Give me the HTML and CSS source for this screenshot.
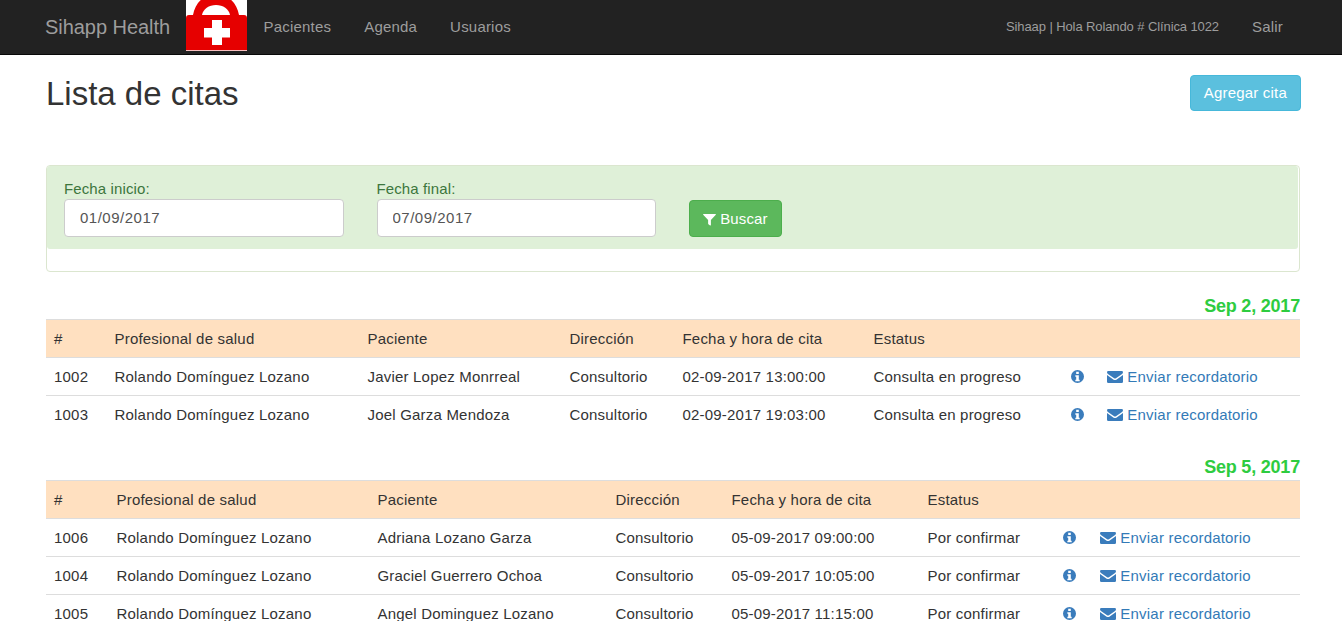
FILE: index.html
```html
<!DOCTYPE html>
<html lang="es">
<head>
<meta charset="utf-8">
<title>Lista de citas</title>
<link rel="stylesheet" href="styles.css">
</head>
<body>
<svg class="sprite" width="0" height="0" aria-hidden="true">
  <symbol id="i-info" viewBox="0 0 24 24"><path fill-rule="evenodd" d="M12 0a12 12 0 1 0 0 24 12 12 0 0 0 0-24zM9.600 3.400h4.800v3.800H9.600zM8 9.600h6.400v8.200H16v2.800H8v-2.800h1.600v-5.400H8z"/></symbol>
  <symbol id="i-mail" viewBox="0 0 24 18"><path d="M2 0h20a2 2 0 0 1 2 2c0 1-.6 1.800-1.400 2.400L13.400 10.800c-.9.6-1.900.6-2.800 0L1.400 4.400C.6 3.800 0 3 0 2a2 2 0 0 1 2-2zM0 6l10 7c1.200.8 2.800.8 4 0l10-7v10a2 2 0 0 1-2 2H2a2 2 0 0 1-2-2z"/></symbol>
</svg>
<nav class="navbar">
  <a class="brand" href="#">Sihapp Health</a>
  <svg class="logo" viewBox="0 0 61 51" aria-label="Logo">
    <rect width="61" height="51" fill="#fff"/>
    <path d="M0 18Q0 15 3 15H7C9 3 18-6 30-6S51 3 53 15H58Q61 15 61 18V50.300H0z" fill="#e60000"/>
    <path d="M16 15C17 9 23 5 30 5S43 9 44 15z" fill="#fff"/>
    <path d="M26 20h10v8h8v9.500h-8V45H26v-7.500h-8V28h8z" fill="#fff"/>
  </svg>
  <ul class="nav">
    <li><a href="#">Pacientes</a></li>
    <li><a href="#">Agenda</a></li>
    <li><a href="#">Usuarios</a></li>
  </ul>
  <span class="nav-text">Sihaap | Hola Rolando # Clínica 1022</span>
  <a class="logout" href="#">Salir</a>
</nav>
<main class="container">
  <header class="page-head">
    <h1>Lista de citas</h1>
    <a class="btn btn-info" href="#">Agregar cita</a>
  </header>
  <section class="panel">
    <form class="filter">
      <div class="field">
        <label for="inicio">Fecha inicio:</label>
        <input id="inicio" type="text" value="01/09/2017">
      </div>
      <div class="field">
        <label for="final">Fecha final:</label>
        <input id="final" type="text" value="07/09/2017">
      </div>
      <button class="btn btn-success" type="button">
        <svg class="funnel" viewBox="0 0 14 14"><path d="M.6 1h12.800c.5 0 .7.6.4 1L8.500 7.500V13c0 .5-.5.7-.9.400L5.800 12c-.2-.2-.3-.4-.3-.6V7.500L.2 2c-.3-.4-.1-1 .4-1z"/></svg>
        Buscar
      </button>
    </form>
  </section>

  <h2 class="day">Sep 2, 2017</h2>
  <table class="table t-a">
    <colgroup><col class="a1"><col class="a2"><col class="a3"><col class="a4"><col class="a5"><col class="a6"><col class="a7"><col></colgroup>
    <thead><tr><th>#</th><th>Profesional de salud</th><th>Paciente</th><th>Dirección</th><th>Fecha y hora de cita</th><th>Estatus</th><th></th><th></th></tr></thead>
    <tbody>
      <tr><td>1002</td><td>Rolando Domínguez Lozano</td><td>Javier Lopez Monrreal</td><td>Consultorio</td><td>02-09-2017 13:00:00</td><td>Consulta en progreso</td><td><a class="ico" href="#"><svg class="i-info"><use href="#i-info"/></svg></a></td><td><a href="#"><svg class="i-mail"><use href="#i-mail"/></svg> Enviar recordatorio</a></td></tr>
      <tr><td>1003</td><td>Rolando Domínguez Lozano</td><td>Joel Garza Mendoza</td><td>Consultorio</td><td>02-09-2017 19:03:00</td><td>Consulta en progreso</td><td><a class="ico" href="#"><svg class="i-info"><use href="#i-info"/></svg></a></td><td><a href="#"><svg class="i-mail"><use href="#i-mail"/></svg> Enviar recordatorio</a></td></tr>
    </tbody>
  </table>

  <h2 class="day day-next">Sep 5, 2017</h2>
  <table class="table t-b">
    <colgroup><col class="b1"><col class="b2"><col class="b3"><col class="b4"><col class="b5"><col class="b6"><col class="b7"><col></colgroup>
    <thead><tr><th>#</th><th>Profesional de salud</th><th>Paciente</th><th>Dirección</th><th>Fecha y hora de cita</th><th>Estatus</th><th></th><th></th></tr></thead>
    <tbody>
      <tr><td>1006</td><td>Rolando Domínguez Lozano</td><td>Adriana Lozano Garza</td><td>Consultorio</td><td>05-09-2017 09:00:00</td><td>Por confirmar</td><td><a class="ico" href="#"><svg class="i-info"><use href="#i-info"/></svg></a></td><td><a href="#"><svg class="i-mail"><use href="#i-mail"/></svg> Enviar recordatorio</a></td></tr>
      <tr><td>1004</td><td>Rolando Domínguez Lozano</td><td>Graciel Guerrero Ochoa</td><td>Consultorio</td><td>05-09-2017 10:05:00</td><td>Por confirmar</td><td><a class="ico" href="#"><svg class="i-info"><use href="#i-info"/></svg></a></td><td><a href="#"><svg class="i-mail"><use href="#i-mail"/></svg> Enviar recordatorio</a></td></tr>
      <tr><td>1005</td><td>Rolando Domínguez Lozano</td><td>Angel Dominguez Lozano</td><td>Consultorio</td><td>05-09-2017 11:15:00</td><td>Por confirmar</td><td><a class="ico" href="#"><svg class="i-info"><use href="#i-info"/></svg></a></td><td><a href="#"><svg class="i-mail"><use href="#i-mail"/></svg> Enviar recordatorio</a></td></tr>
    </tbody>
  </table>
</main>
</body>
</html>
```
FILE: styles.css
```css
* { box-sizing: border-box; }
html, body { height: 621px; overflow: hidden; }
body {
  margin: 0;
  background: #fff;
  color: #333;
  font: 15px/20px "Liberation Sans", Arial, sans-serif;
  letter-spacing: .2px;
}
a { text-decoration: none; color: #337ab7; }
.sprite { position: absolute; }

.navbar {
  display: flex;
  align-items: flex-start;
  height: 55px;
  padding: 0 45px;
  background: #222;
  border-bottom: 1px solid #080808;
  letter-spacing: 0;
}
.brand { width: 141px; font-size: 20px; letter-spacing: -.05px; line-height: 54px; color: #9d9d9d; }
.logo { width: 61px; height: 51px; flex: none; }
.nav { display: flex; gap: 33px; margin: 0 0 0 16.500px; padding: 0; list-style: none; letter-spacing: .2px; }
.nav a { display: block; line-height: 54px; color: #9d9d9d; }
.nav-text { margin-left: auto; font-size: 13px; letter-spacing: -.1px; line-height: 54px; color: #9d9d9d; }
.logout { margin: 0 14px 0 33px; letter-spacing: .2px; line-height: 54px; color: #9d9d9d; }

.container { padding: 0 42px 0 46px; }
.page-head { display: flex; justify-content: space-between; align-items: flex-start; height: 110px; padding-top: 20px; }
h1 { margin: 0; font-size: 33px; font-weight: 400; line-height: 38px; letter-spacing: 0; }

.btn {
  display: inline-block;
  padding: 8px 13px;
  border: 1px solid transparent;
  border-radius: 4px;
  font: 15px/18px "Liberation Sans", Arial, sans-serif;
  letter-spacing: .2px;
  color: #fff;
}
.btn-info { margin-right: -1px; background: #5bc0de; border-color: #46b8da; }
.btn-success { padding: 9px 13px; height: 37px; background: #5cb85c; border-color: #4cae4c; letter-spacing: .1px; }
.funnel { width: 13px; height: 13px; fill: #fff; vertical-align: -2px; }

.panel { height: 107px; border: 1px solid #dbe6cf; border-radius: 4px; }
.filter {
  display: flex;
  align-items: flex-end;
  gap: 33px;
  width: 1251px;
  height: 83px;
  padding: 14px 17px 12px;
  background: #dff0d8;
  border-radius: 3px;
  color: #3c763d;
}
.field { display: flex; flex-direction: column; width: 279.500px; }
.field label { line-height: 16px; margin-bottom: 2px; letter-spacing: .12px; color: #3c763d; }
.field input {
  height: 38px;
  padding: 0 15px 2px;
  border: 1px solid #ccc;
  border-radius: 4px;
  background: #fff;
  color: #555;
  font: 15px "Liberation Sans", Arial, sans-serif;
  letter-spacing: .5px;
}

.day { margin: 23px 0 2px; font-size: 18px; line-height: 22px; font-weight: 700; letter-spacing: -.2px; text-align: right; color: #2ecc40; }
.day-next { margin: 22px 0 2px; }
.table { width: 1254px; table-layout: fixed; border-collapse: collapse; }
.table th, .table td { height: 38px; padding: 8px; text-align: left; font-weight: 400; white-space: nowrap; border-top: 1px solid #ddd; }
.t-b th, .t-b td { padding: 9px 8px 7px; }
.table thead th { background: #ffe0c0; }
.i-info { width: 13px; height: 13px; fill: #3a7cbc; vertical-align: -1px; }
.i-mail { width: 16px; height: 12px; fill: #3a7cbc; vertical-align: -1px; }
.ico { display: block; padding-left: 2.500px; }
.t-b .ico { padding-left: 1.500px; }

.a1 { width: 60.500px; } .a2 { width: 253px; } .a3 { width: 202px; } .a4 { width: 113px; } .a5 { width: 191px; } .a6 { width: 194.500px; } .a7 { width: 39px; }
.b1 { width: 62.500px; } .b2 { width: 261px; } .b3 { width: 238px; } .b4 { width: 116px; } .b5 { width: 196px; } .b6 { width: 133.500px; } .b7 { width: 39px; }
```
